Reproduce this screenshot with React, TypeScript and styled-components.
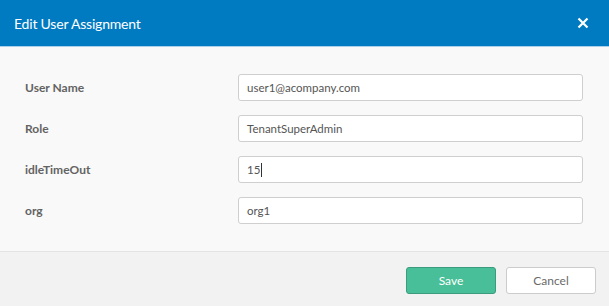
import React from 'react';
import styled, { createGlobalStyle } from 'styled-components';

const GlobalStyle = createGlobalStyle`
	html, body {
		margin: 0;
		padding: 0;
		background: #f9f9f9;
		font-family: Lato, "Open Sans", "Liberation Sans", sans-serif;
	}
`;

const Dialog = styled.div`
	width: 609px;
	height: 306px;
	display: flex;
	flex-direction: column;
	background: #f9f9f9;
	overflow: hidden;
`;

const Header = styled.div`
	height: 46px;
	flex: none;
	display: flex;
	align-items: center;
	justify-content: space-between;
	padding: 0 20px 0 14px;
	background: #007bc1;
	border-bottom: 1px solid #a9cfe9;
`;

const Title = styled.div`
	color: #ffffff;
	font-size: 14px;
	letter-spacing: -0.2px;
`;

const CloseButton = styled.button`
	border: 0;
	background: none;
	padding: 0;
	width: 12px;
	height: 12px;
	display: flex;
	cursor: pointer;
`;

const Body = styled.div`
	flex: 1;
	display: grid;
	grid-template-columns: 213px 1fr;
	row-gap: 14px;
	align-content: start;
	padding: 27px 26px 0 25px;
`;

const Label = styled.div`
	display: flex;
	align-items: center;
	font-size: 12px;
	font-weight: 700;
	color: #636363;
	height: 27px;
`;

const Field = styled.div`
	box-sizing: border-box;
	height: 27px;
	display: flex;
	align-items: center;
	padding: 0 8px;
	background: #ffffff;
	border: 1px solid #cfcfcf;
	border-radius: 3px;
	font-size: 11.5px;
	color: #555555;
`;

const Caret = styled.span`
	display: inline-block;
	width: 1px;
	height: 14px;
	margin-left: 1px;
	background: #333333;
`;

const Footer = styled.div`
	height: 55px;
	flex: none;
	display: flex;
	justify-content: flex-end;
	align-items: flex-start;
	gap: 10px;
	padding: 15px 13px 0 0;
	box-sizing: border-box;
	background: #f2f2f2;
	border-top: 1px solid #e3e3e3;
`;

const Button = styled.button<{ $primary?: boolean }>`
	width: 90px;
	height: 27px;
	box-sizing: border-box;
	border-radius: 3px;
	font-family: inherit;
	font-size: 12px;
	cursor: pointer;
	background: ${(p) => (p.$primary ? '#48bf98' : '#ffffff')};
	border: 1px solid ${(p) => (p.$primary ? '#3a9c7c' : '#cccccc')};
	color: ${(p) => (p.$primary ? '#ffffff' : '#6a6a6a')};
`;

const rows = [
	{ label: 'User Name', value: 'user1@acompany.com' },
	{ label: 'Role', value: 'TenantSuperAdmin' },
	{ label: 'idleTimeOut', value: '15', focused: true },
	{ label: 'org', value: 'org1' },
];

export default function App() {
	return (
		<>
			<GlobalStyle />
			<Dialog>
				<Header>
					<Title>Edit User Assignment</Title>
					<CloseButton aria-label="Close">
						<svg width="12" height="12" viewBox="0 0 12 12">
							<path d="M1.5 1.5 L10.5 10.5 M10.5 1.5 L1.5 10.5" stroke="#ffffff" strokeWidth="2.2" />
						</svg>
					</CloseButton>
				</Header>
				<Body>
					{rows.map((row) => (
						<React.Fragment key={row.label}>
							<Label>{row.label}</Label>
							<Field>
								{row.value}
								{row.focused && <Caret />}
							</Field>
						</React.Fragment>
					))}
				</Body>
				<Footer>
					<Button $primary>Save</Button>
					<Button>Cancel</Button>
				</Footer>
			</Dialog>
		</>
	);
}
